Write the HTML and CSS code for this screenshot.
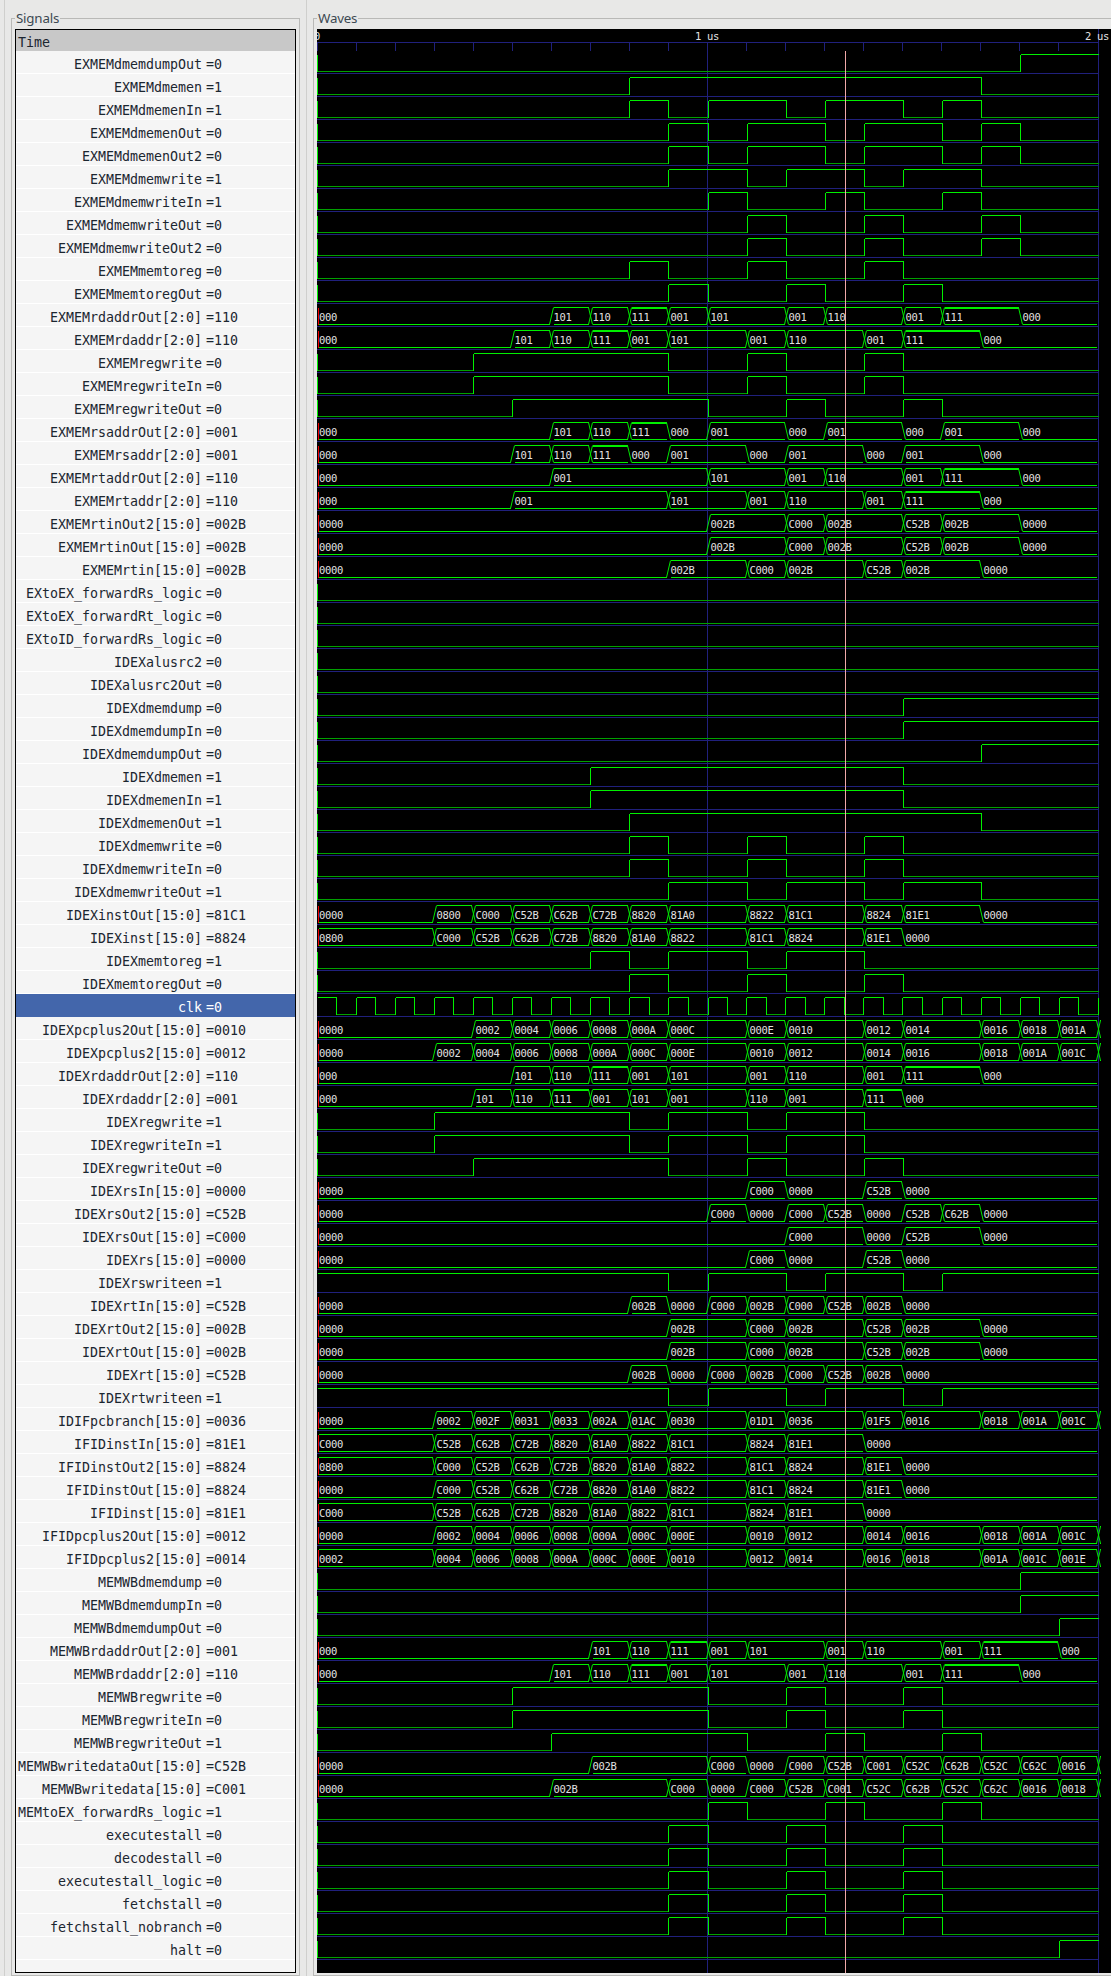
FILE: index.html
```html
<!DOCTYPE html>
<html lang="en">
<head>
<meta charset="utf-8">
<title>GTKWave</title>
<link rel="stylesheet" href="styles.css">
</head>
<body>
<main class="app">
  <section class="pane pane-signals">
    <fieldset class="frame frame-signals">
      <legend class="frame-title">Signals</legend>
      <div class="signal-list">
        <div class="time-head">Time</div>
        <div class="sig"><span class="name">EXMEMdmemdumpOut</span><span class="val">=0</span></div>
        <div class="sig"><span class="name">EXMEMdmemen</span><span class="val">=1</span></div>
        <div class="sig"><span class="name">EXMEMdmemenIn</span><span class="val">=1</span></div>
        <div class="sig"><span class="name">EXMEMdmemenOut</span><span class="val">=0</span></div>
        <div class="sig"><span class="name">EXMEMdmemenOut2</span><span class="val">=0</span></div>
        <div class="sig"><span class="name">EXMEMdmemwrite</span><span class="val">=1</span></div>
        <div class="sig"><span class="name">EXMEMdmemwriteIn</span><span class="val">=1</span></div>
        <div class="sig"><span class="name">EXMEMdmemwriteOut</span><span class="val">=0</span></div>
        <div class="sig"><span class="name">EXMEMdmemwriteOut2</span><span class="val">=0</span></div>
        <div class="sig"><span class="name">EXMEMmemtoreg</span><span class="val">=0</span></div>
        <div class="sig"><span class="name">EXMEMmemtoregOut</span><span class="val">=0</span></div>
        <div class="sig"><span class="name">EXMEMrdaddrOut[2:0]</span><span class="val">=110</span></div>
        <div class="sig"><span class="name">EXMEMrdaddr[2:0]</span><span class="val">=110</span></div>
        <div class="sig"><span class="name">EXMEMregwrite</span><span class="val">=0</span></div>
        <div class="sig"><span class="name">EXMEMregwriteIn</span><span class="val">=0</span></div>
        <div class="sig"><span class="name">EXMEMregwriteOut</span><span class="val">=0</span></div>
        <div class="sig"><span class="name">EXMEMrsaddrOut[2:0]</span><span class="val">=001</span></div>
        <div class="sig"><span class="name">EXMEMrsaddr[2:0]</span><span class="val">=001</span></div>
        <div class="sig"><span class="name">EXMEMrtaddrOut[2:0]</span><span class="val">=110</span></div>
        <div class="sig"><span class="name">EXMEMrtaddr[2:0]</span><span class="val">=110</span></div>
        <div class="sig"><span class="name">EXMEMrtinOut2[15:0]</span><span class="val">=002B</span></div>
        <div class="sig"><span class="name">EXMEMrtinOut[15:0]</span><span class="val">=002B</span></div>
        <div class="sig"><span class="name">EXMEMrtin[15:0]</span><span class="val">=002B</span></div>
        <div class="sig"><span class="name">EXtoEX_forwardRs_logic</span><span class="val">=0</span></div>
        <div class="sig"><span class="name">EXtoEX_forwardRt_logic</span><span class="val">=0</span></div>
        <div class="sig"><span class="name">EXtoID_forwardRs_logic</span><span class="val">=0</span></div>
        <div class="sig"><span class="name">IDEXalusrc2</span><span class="val">=0</span></div>
        <div class="sig"><span class="name">IDEXalusrc2Out</span><span class="val">=0</span></div>
        <div class="sig"><span class="name">IDEXdmemdump</span><span class="val">=0</span></div>
        <div class="sig"><span class="name">IDEXdmemdumpIn</span><span class="val">=0</span></div>
        <div class="sig"><span class="name">IDEXdmemdumpOut</span><span class="val">=0</span></div>
        <div class="sig"><span class="name">IDEXdmemen</span><span class="val">=1</span></div>
        <div class="sig"><span class="name">IDEXdmemenIn</span><span class="val">=1</span></div>
        <div class="sig"><span class="name">IDEXdmemenOut</span><span class="val">=1</span></div>
        <div class="sig"><span class="name">IDEXdmemwrite</span><span class="val">=0</span></div>
        <div class="sig"><span class="name">IDEXdmemwriteIn</span><span class="val">=0</span></div>
        <div class="sig"><span class="name">IDEXdmemwriteOut</span><span class="val">=1</span></div>
        <div class="sig"><span class="name">IDEXinstOut[15:0]</span><span class="val">=81C1</span></div>
        <div class="sig"><span class="name">IDEXinst[15:0]</span><span class="val">=8824</span></div>
        <div class="sig"><span class="name">IDEXmemtoreg</span><span class="val">=1</span></div>
        <div class="sig"><span class="name">IDEXmemtoregOut</span><span class="val">=0</span></div>
        <div class="sig sig-selected"><span class="name">clk</span><span class="val">=0</span></div>
        <div class="sig"><span class="name">IDEXpcplus2Out[15:0]</span><span class="val">=0010</span></div>
        <div class="sig"><span class="name">IDEXpcplus2[15:0]</span><span class="val">=0012</span></div>
        <div class="sig"><span class="name">IDEXrdaddrOut[2:0]</span><span class="val">=110</span></div>
        <div class="sig"><span class="name">IDEXrdaddr[2:0]</span><span class="val">=001</span></div>
        <div class="sig"><span class="name">IDEXregwrite</span><span class="val">=1</span></div>
        <div class="sig"><span class="name">IDEXregwriteIn</span><span class="val">=1</span></div>
        <div class="sig"><span class="name">IDEXregwriteOut</span><span class="val">=0</span></div>
        <div class="sig"><span class="name">IDEXrsIn[15:0]</span><span class="val">=0000</span></div>
        <div class="sig"><span class="name">IDEXrsOut2[15:0]</span><span class="val">=C52B</span></div>
        <div class="sig"><span class="name">IDEXrsOut[15:0]</span><span class="val">=C000</span></div>
        <div class="sig"><span class="name">IDEXrs[15:0]</span><span class="val">=0000</span></div>
        <div class="sig"><span class="name">IDEXrswriteen</span><span class="val">=1</span></div>
        <div class="sig"><span class="name">IDEXrtIn[15:0]</span><span class="val">=C52B</span></div>
        <div class="sig"><span class="name">IDEXrtOut2[15:0]</span><span class="val">=002B</span></div>
        <div class="sig"><span class="name">IDEXrtOut[15:0]</span><span class="val">=002B</span></div>
        <div class="sig"><span class="name">IDEXrt[15:0]</span><span class="val">=C52B</span></div>
        <div class="sig"><span class="name">IDEXrtwriteen</span><span class="val">=1</span></div>
        <div class="sig"><span class="name">IDIFpcbranch[15:0]</span><span class="val">=0036</span></div>
        <div class="sig"><span class="name">IFIDinstIn[15:0]</span><span class="val">=81E1</span></div>
        <div class="sig"><span class="name">IFIDinstOut2[15:0]</span><span class="val">=8824</span></div>
        <div class="sig"><span class="name">IFIDinstOut[15:0]</span><span class="val">=8824</span></div>
        <div class="sig"><span class="name">IFIDinst[15:0]</span><span class="val">=81E1</span></div>
        <div class="sig"><span class="name">IFIDpcplus2Out[15:0]</span><span class="val">=0012</span></div>
        <div class="sig"><span class="name">IFIDpcplus2[15:0]</span><span class="val">=0014</span></div>
        <div class="sig"><span class="name">MEMWBdmemdump</span><span class="val">=0</span></div>
        <div class="sig"><span class="name">MEMWBdmemdumpIn</span><span class="val">=0</span></div>
        <div class="sig"><span class="name">MEMWBdmemdumpOut</span><span class="val">=0</span></div>
        <div class="sig"><span class="name">MEMWBrdaddrOut[2:0]</span><span class="val">=001</span></div>
        <div class="sig"><span class="name">MEMWBrdaddr[2:0]</span><span class="val">=110</span></div>
        <div class="sig"><span class="name">MEMWBregwrite</span><span class="val">=0</span></div>
        <div class="sig"><span class="name">MEMWBregwriteIn</span><span class="val">=0</span></div>
        <div class="sig"><span class="name">MEMWBregwriteOut</span><span class="val">=1</span></div>
        <div class="sig"><span class="name">MEMWBwritedataOut[15:0]</span><span class="val">=C52B</span></div>
        <div class="sig"><span class="name">MEMWBwritedata[15:0]</span><span class="val">=C001</span></div>
        <div class="sig"><span class="name">MEMtoEX_forwardRs_logic</span><span class="val">=1</span></div>
        <div class="sig"><span class="name">executestall</span><span class="val">=0</span></div>
        <div class="sig"><span class="name">decodestall</span><span class="val">=0</span></div>
        <div class="sig"><span class="name">executestall_logic</span><span class="val">=0</span></div>
        <div class="sig"><span class="name">fetchstall</span><span class="val">=0</span></div>
        <div class="sig"><span class="name">fetchstall_nobranch</span><span class="val">=0</span></div>
        <div class="sig"><span class="name">halt</span><span class="val">=0</span></div>
      </div>
    </fieldset>
  </section>
  <section class="pane pane-waves">
    <fieldset class="frame frame-waves">
      <legend class="frame-title">Waves</legend>
      <div class="wave-view">
        <svg id="waves" class="wave-svg" xmlns="http://www.w3.org/2000/svg" width="794" height="1944" viewBox="317 29 794 1944"></svg>
      </div>
    </fieldset>
  </section>
</main>
<script src="waves.js"></script>
</body>
</html>
```

FILE: styles.css
```css
html, body {
  margin: 0;
  padding: 0;
  background: #e8e8e7;
}

.app {
  display: flex;
  width: 1111px;
  height: 1976px;
  overflow: hidden;
}

.pane {
  flex: none;
  border-left: 1px solid #cfcfcd;
  padding: 7px 6px 0;
  box-sizing: border-box;
}

.pane-signals {
  width: 302px;
  margin-left: 4px;
}

.pane-waves {
  width: 810px;
}

.frame {
  margin: 0;
  padding: 0 3px 2px;
  border: 1px solid #b9b9b7;
  min-width: 0;
  box-sizing: border-box;
}

.frame-signals {
  width: 289px;
}

.frame-waves {
  width: 802px;
}

.frame-title {
  margin-left: 0;
  padding: 0 1px;
  font-family: "Noto Sans", sans-serif;
  font-size: 13.33px;
  letter-spacing: -0.2px;
  line-height: 22px;
  color: #3c4852;
}

.signal-list {
  height: 1944px;
  box-sizing: border-box;
  border: 1px solid #000;
  background: #f5f5f5;
  overflow: hidden;
  font-family: "DejaVu Sans Mono", monospace;
  font-size: 13.3px;
  color: #1b2630;
}

.time-head {
  height: 21px;
  box-sizing: border-box;
  padding: 2px 0 0 2px;
  line-height: 21px;
  background: #c8c8c8;
}

.sig {
  display: grid;
  grid-template-columns: 186px 1fr;
  column-gap: 4px;
  height: 23px;
  box-sizing: border-box;
  padding-top: 2px;
  border-bottom: 1px solid #fff;
  line-height: 24px;
  white-space: pre;
}

.sig-selected {
  background: #4366ab;
  color: #fff;
  border-bottom-color: #4366ab;
}

.name {
  text-align: right;
}

.wave-view {
  width: 794px;
  height: 1944px;
  background: #000;
}

.wave-svg {
  display: block;
}

.grid-line {
  stroke: #20207c;
  stroke-width: 1;
  shape-rendering: crispEdges;
}

.low {
  fill: none;
  stroke: #00a000;
  stroke-width: 1;
  shape-rendering: crispEdges;
}

.high {
  fill: none;
  stroke: #00f000;
  stroke-width: 1;
  shape-rendering: crispEdges;
}

.bus {
  fill: none;
  stroke: #00e800;
  stroke-width: 1;
}

.bus-flat {
  fill: none;
  stroke: #00f000;
  stroke-width: 1;
  shape-rendering: crispEdges;
}

.bus-start {
  stroke: #f00000;
  stroke-width: 1;
  shape-rendering: crispEdges;
}

.marker {
  stroke: #f0a8a8;
  stroke-width: 1;
  shape-rendering: crispEdges;
}

.bus-label,
.time-label {
  font-family: "DejaVu Sans Mono", monospace;
  font-size: 10.5px;
  letter-spacing: -0.32px;
  fill: #e2e2e2;
}
```

FILE: waves.js
```js
(function () {
  var NS = "http://www.w3.org/2000/svg";
  var svg = document.getElementById("waves");

  function stepX(k) {
    return 317 + 39 * k + (k >= 10 ? 1 : 0) + 0.5;
  }

  function add(tag, attrs, text) {
    var el = document.createElementNS(NS, tag);
    for (var key in attrs) el.setAttribute(key, attrs[key]);
    if (text) el.textContent = text;
    svg.appendChild(el);
    return el;
  }

  function line(cls, x1, y1, x2, y2) {
    add("line", { "class": cls, x1: x1, y1: y1, x2: x2, y2: y2 });
  }

  var RIGHT = 1099;

  /* number array: toggle points of a one-bit signal, starting low.
     {start: 1, e: [...]}: same, starting high.
     string: "edge:value" pairs of a bus. */
  var EN_OUT = [9, 10, 11, 13, 14, 16, 17, 18];
  var WR_OUT = [11, 12, 14, 15, 17, 18];
  var REG = [4, 9, 11, 12, 14, 15];
  var RD_OUT = "0:000 6:101 7:110 8:111 9:001 10:101 12:001 13:110 15:001 16:111 18:000";
  var RD = "0:000 5:101 6:110 7:111 8:001 9:101 11:001 12:110 14:001 15:111 17:000";
  var RTIN_OUT = "0:0000 10:002B 12:C000 13:002B 15:C52B 16:002B 18:0000";
  var MEMRW = [8, 9, 11, 12, 14, 15];
  var IDEX_REG = [3, 8, 9, 11, 12, 14];
  var RS_IN = "0:0000 11:C000 12:0000 14:C52B 15:0000";
  var RT_IN = "0:0000 8:002B 9:0000 10:C000 11:002B 12:C000 13:C52B 14:002B 15:0000";
  var RT_OUT = "0:0000 9:002B 11:C000 12:002B 14:C52B 15:002B 17:0000";
  var WREN = { start: 1, e: [9, 10, 12, 13, 15, 16] };
  var STALL = [9, 10, 12, 13, 15, 16];
  var MEMWB_REG = [5, 10, 12, 13, 15, 16];

  var rows = [
    [18],
    [8, 17],
    [8, 9, 10, 12, 13, 15, 16, 17],
    EN_OUT,
    EN_OUT,
    [9, 11, 12, 14, 15, 17],
    [10, 11, 13, 14, 16, 17],
    WR_OUT,
    WR_OUT,
    MEMRW,
    [9, 10, 12, 13, 15, 16],
    RD_OUT,
    RD,
    REG,
    REG,
    [5, 10, 12, 13, 15, 16],
    "0:000 6:101 7:110 8:111 9:000 10:001 12:000 13:001 15:000 16:001 18:000",
    "0:000 5:101 6:110 7:111 8:000 9:001 11:000 12:001 14:000 15:001 17:000",
    "0:000 6:001 10:101 12:001 13:110 15:001 16:111 18:000",
    "0:000 5:001 9:101 11:001 12:110 14:001 15:111 17:000",
    RTIN_OUT,
    RTIN_OUT,
    RT_OUT,
    [],
    [],
    [],
    [],
    [],
    [15],
    [15],
    [17],
    [7, 15],
    [7, 15],
    [8, 17],
    MEMRW,
    MEMRW,
    [9, 11, 12, 14, 15, 17],
    "0:0000 3:0800 4:C000 5:C52B 6:C62B 7:C72B 8:8820 9:81A0 11:8822 12:81C1 14:8824 15:81E1 17:0000",
    "0:0800 3:C000 4:C52B 5:C62B 6:C72B 7:8820 8:81A0 9:8822 11:81C1 12:8824 14:81E1 15:0000",
    [7, 8, 9, 11, 12, 14],
    [8, 9, 11, 12, 14, 15],
    "clk",
    "0:0000 4:0002 5:0004 6:0006 7:0008 8:000A 9:000C 11:000E 12:0010 14:0012 15:0014 17:0016 18:0018 19:001A 20:-",
    "0:0000 3:0002 4:0004 5:0006 6:0008 7:000A 8:000C 9:000E 11:0010 12:0012 14:0014 15:0016 17:0018 18:001A 19:001C 20:-",
    RD,
    "0:000 4:101 5:110 6:111 7:001 8:101 9:001 11:110 12:001 14:111 15:000",
    IDEX_REG,
    IDEX_REG,
    [4, 9, 11, 12, 14, 15],
    RS_IN,
    "0:0000 10:C000 11:0000 12:C000 13:C52B 14:0000 15:C52B 16:C62B 17:0000",
    "0:0000 12:C000 14:0000 15:C52B 17:0000",
    RS_IN,
    WREN,
    RT_IN,
    RT_OUT,
    RT_OUT,
    RT_IN,
    WREN,
    "0:0000 3:0002 4:002F 5:0031 6:0033 7:002A 8:01AC 9:0030 11:01D1 12:0036 14:01F5 15:0016 17:0018 18:001A 19:001C 20:-",
    "0:C000 3:C52B 4:C62B 5:C72B 6:8820 7:81A0 8:8822 9:81C1 11:8824 12:81E1 14:0000",
    "0:0800 3:C000 4:C52B 5:C62B 6:C72B 7:8820 8:81A0 9:8822 11:81C1 12:8824 14:81E1 15:0000",
    "0:0000 3:C000 4:C52B 5:C62B 6:C72B 7:8820 8:81A0 9:8822 11:81C1 12:8824 14:81E1 15:0000",
    "0:C000 3:C52B 4:C62B 5:C72B 6:8820 7:81A0 8:8822 9:81C1 11:8824 12:81E1 14:0000",
    "0:0000 3:0002 4:0004 5:0006 6:0008 7:000A 8:000C 9:000E 11:0010 12:0012 14:0014 15:0016 17:0018 18:001A 19:001C 20:-",
    "0:0002 3:0004 4:0006 5:0008 6:000A 7:000C 8:000E 9:0010 11:0012 12:0014 14:0016 15:0018 17:001A 18:001C 19:001E 20:-",
    [18],
    [18],
    [19],
    "0:000 7:101 8:110 9:111 10:001 11:101 13:001 14:110 16:001 17:111 19:000",
    "0:000 6:101 7:110 8:111 9:001 10:101 12:001 13:110 15:001 16:111 18:000",
    MEMWB_REG,
    MEMWB_REG,
    [6, 11, 13, 14, 16, 17],
    "0:0000 7:002B 10:C000 11:0000 12:C000 13:C52B 14:C001 15:C52C 16:C62B 17:C52C 18:C62C 19:0016 20:-",
    "0:0000 6:002B 9:C000 10:0000 11:C000 12:C52B 13:C001 14:C52C 15:C62B 16:C52C 17:C62C 18:0016 19:0018 20:-",
    [10, 11, 13, 14, 16, 17],
    STALL,
    STALL,
    STALL,
    STALL,
    STALL,
    [19]
  ];

  /* ruler and grid */
  line("grid-line", 317, 42.5, 1099, 42.5);
  for (var t = 0; t < 20; t++) {
    if (t !== 10) line("grid-line", 317.5 + 39 * t, 42, 317.5 + 39 * t, 51);
  }
  line("grid-line", 707.5, 42, 707.5, 1973);
  line("grid-line", 1098.5, 29, 1098.5, 1973);
  for (var s = 0; s < 83; s++) {
    line("grid-line", 317, 73.5 + 23 * s, 1099, 73.5 + 23 * s);
  }

  add("text", { "class": "time-label", x: 317, y: 40, "text-anchor": "middle" }, "0");
  add("text", { "class": "time-label", x: 707, y: 40, "text-anchor": "middle" }, "1 us");
  add("text", { "class": "time-label", x: 1097, y: 40, "text-anchor": "middle" }, "2 us");

  function drawBits(edges, startHigh, hi, lo) {
    var level = startHigh ? 1 : 0;
    var from = 317.5;
    if (!startHigh) line("high", 317.5, hi, 317.5, lo);
    edges.concat([20.05]).forEach(function (k) {
      var x = k > 20 ? RIGHT : stepX(k);
      var y = level ? hi : lo;
      line(level ? "high" : "low", from, y, x, y);
      if (k <= 20) line("high", x, hi, x, lo);
      from = x;
      level = 1 - level;
    });
  }

  function drawClock(hi, lo) {
    for (var k = 0; k <= 20; k++) {
      var rise = k === 0 ? 317.5 : 317.5 + 39 * k + (k >= 16 ? 1 : 0);
      if (k === 10) rise = 708.5;
      var fall = 336.5 + 39 * k + (k >= 8 ? 1 : 0);
      if (k > 0) {
        line("high", rise, hi, rise, lo);
      }
      if (k === 20) break;
      line("high", rise, hi, fall, hi);
      line("high", fall, hi, fall, lo);
      var next = 317.5 + 39 * (k + 1) + (k + 1 >= 16 ? 1 : 0);
      if (k + 1 === 10) next = 708.5;
      line("low", fall, lo, next, lo);
    }
  }

  function drawBus(spec, hi, lo) {
    var segs = spec.split(" ").map(function (part) {
      var p = part.split(":");
      return { k: +p[0], v: p[1] === "-" ? "" : p[1] };
    });
    line("bus-start", 318.5, hi, 318.5, lo);
    segs.forEach(function (seg, i) {
      var next = segs[i + 1];
      var zero = /^0+$/.test(seg.v);
      var left = i === 0 ? 319 : stepX(seg.k) + 2;
      var right = next ? stepX(next.k) - 2 : (seg.k >= 20 ? RIGHT + 1 : 1097);
      line("bus-flat", left, lo, right, lo);
      if (!zero) {
        line("bus-flat", left, hi, right, hi);
        if (seg.v === "111") line("bus-flat", left, hi + 1, right, hi + 1);
      }
      if (next) {
        var e = stepX(next.k);
        var nextZero = /^0+$/.test(next.v);
        if (!zero) add("line", { "class": "bus", x1: e - 2, y1: hi, x2: e + 2, y2: lo });
        if (!nextZero) add("line", { "class": "bus", x1: e - 2, y1: lo, x2: e + 2, y2: hi });
      }
      if (seg.v) {
        add("text", { "class": "bus-label", x: (i === 0 ? 319 : stepX(seg.k) + 2), y: lo - 3.5 }, seg.v);
      }
    });
  }

  rows.forEach(function (row, n) {
    var hi = 54.5 + 23 * n;
    var lo = 71.5 + 23 * n;
    if (row === "clk") drawClock(hi, lo);
    else if (typeof row === "string") drawBus(row, hi, lo);
    else if (Array.isArray(row)) drawBits(row, false, hi, lo);
    else drawBits(row.e, true, hi, lo);
  });

  line("marker", 845.5, 51, 845.5, 1973);
})();
```
